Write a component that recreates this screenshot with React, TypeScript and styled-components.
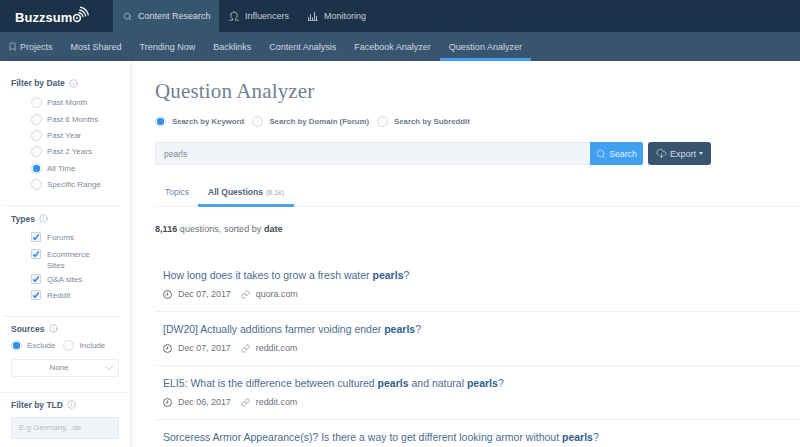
import React from "react";
import styled, { createGlobalStyle } from "styled-components";
import { Search, Bookmark, Info, ChevronDown, Link, CloudDownload } from "lucide-react";

const Global = createGlobalStyle`
  html, body {
    margin: 0;
    padding: 0;
    height: 447px;
    overflow: hidden;
    background: #fff;
    font-family: "Liberation Sans", Arial, sans-serif;
  }
  * { box-sizing: border-box; }
`;

const Page = styled.div`
  width: 800px;
  height: 447px;
  overflow: hidden;
  display: flex;
  flex-direction: column;
`;

const TopBar = styled.div`
  height: 32px;
  flex: none;
  display: flex;
  background: #1c3249;
`;

const Logo = styled.div`
  width: 113px;
  padding: 2px 0 0 15px;
  display: flex;
  align-items: center;
  color: #fff;
  font-size: 13px;
  font-weight: 700;
  letter-spacing: 0.05px;
  svg { margin-top: -5px; }
`;

const TopTab = styled.div<{ $active?: boolean }>`
  display: flex;
  align-items: center;
  gap: 6px;
  height: 32px;
  padding: 0 9px 0 10px;
  font-size: 9px;
  white-space: nowrap;
  color: ${(p) => (p.$active ? "#d3dde5" : "#c3ced8")};
  background: ${(p) => (p.$active ? "#36566f" : "transparent")};
  ${(p) => p.$active && "width: 106px; flex: none; padding-right: 0;"}
`;

const SubBar = styled.div`
  height: 29px;
  flex: none;
  display: flex;
  padding-left: 8px;
  gap: 18px;
  background: #37556f;
`;

const SubTab = styled.div<{ $active?: boolean }>`
  display: flex;
  align-items: center;
  gap: 3px;
  font-size: 9px;
  color: #d0d9e1;
  height: 29px;
  ${(p) =>
    p.$active &&
    `
    margin-left: -9px;
    padding: 3px 9px 0;
    border-bottom: 3px solid #42a0f0;
  `}
`;

const Body = styled.div`
  flex: 1;
  display: flex;
  min-height: 0;
`;

const Sidebar = styled.aside`
  width: 130px;
  flex: none;
  background: #fff;
  box-shadow: 1px 0 6px rgba(40, 60, 80, 0.12);
  padding-top: 15px;
  position: relative;
`;

const Section = styled.section<{ $top?: number }>`
  padding: ${(p) => p.$top || 0}px 11px 0;
`;

const Divider = styled.div<{ $wide?: boolean; $top: number }>`
  height: 1px;
  background: #eef0f3;
  margin: ${(p) => p.$top}px ${(p) => (p.$wide ? "0 0 0" : "11px 0 4px")};
`;

const SectionTitle = styled.div`
  display: flex;
  align-items: center;
  gap: 4px;
  font-size: 8.5px;
  font-weight: 700;
  color: #4a6078;
  height: 14px;
  svg { color: #7d8fa1; }
`;

const OptionList = styled.div<{ $top: number }>`
  padding: ${(p) => p.$top}px 0 0 20px;
`;

const Option = styled.div`
  display: flex;
  align-items: center;
  gap: 5px;
  height: 16.4px;
  font-size: 8px;
  color: #7a8b9c;
`;

const Radio = styled.span<{ $on?: boolean }>`
  width: 11px;
  height: 11px;
  flex: none;
  border-radius: 50%;
  border: 1px solid #d5dbe1;
  background: ${(p) => (p.$on ? "radial-gradient(circle, #2f92ee 0 3.5px, #fff 4px)" : "#fbfcfd")};
`;

const Check = styled.span`
  width: 10px;
  height: 10px;
  flex: none;
  border: 1px solid #cbd3dc;
  border-radius: 1px;
  background: #f6f8fa;
  display: flex;
  align-items: center;
  justify-content: center;
`;

const CheckRow = styled.div<{ $wrapped?: boolean }>`
  display: flex;
  align-items: flex-start;
  gap: 6px;
  font-size: 8px;
  line-height: 11px;
  color: #7a8b9c;
  margin-bottom: ${(p) => (p.$wrapped ? 3 : 5.5)}px;
`;

const SourceRow = styled.div`
  display: flex;
  align-items: center;
  font-size: 8px;
  color: #7a8b9c;
  margin-top: 4.5px;
  height: 11px;
`;

const SourceLabel = styled.span`
  margin: 0 8px 0 5px;
`;

const Select = styled.div`
  margin-top: 7.5px;
  height: 18px;
  border: 1px solid #e8ebef;
  border-radius: 2px;
  font-size: 8px;
  color: #7a8b9c;
  display: flex;
  align-items: center;
  justify-content: center;
  position: relative;
  padding-right: 12px;
  svg { position: absolute; right: 2px; top: 1px; color: #8494a5; }
`;

const TldInput = styled.div`
  margin-top: 5px;
  height: 22px;
  background: #f1f4f8;
  border: 1px solid #e6e9ed;
  border-radius: 2px;
  font-size: 8px;
  color: #b3bdc8;
  display: flex;
  align-items: center;
  padding-left: 7px;
`;

const Main = styled.main`
  flex: 1;
  padding: 17px 0 0 25px;
  min-width: 0;
`;

const Title = styled.h1`
  margin: 0;
  font-family: "Liberation Serif", serif;
  font-weight: 400;
  font-size: 21px;
  line-height: 26px;
  letter-spacing: 0.15px;
  color: #6d8195;
`;

const SearchModes = styled.div`
  display: flex;
  align-items: center;
  margin-top: 11px;
  height: 12px;
`;

const Mode = styled.div`
  display: flex;
  align-items: center;
  gap: 6px;
  margin-right: 8px;
  font-size: 7.8px;
  font-weight: 700;
  color: #687c90;
`;

const SearchRow = styled.div`
  display: flex;
  margin-top: 15px;
  height: 23px;
`;

const SearchInput = styled.div`
  width: 435px;
  background: #f1f4f8;
  border: 1px solid #e9ecef;
  border-right: 0;
  font-size: 8.5px;
  color: #7c8893;
  display: flex;
  align-items: center;
  padding-left: 8px;
`;

const SearchButton = styled.div`
  width: 53px;
  background: #42a0f0;
  border-radius: 0 2px 2px 0;
  color: #e4f1fc;
  font-size: 8.7px;
  display: flex;
  align-items: center;
  justify-content: center;
  gap: 3px;
`;

const ExportButton = styled.div`
  width: 63px;
  margin-left: 5px;
  background: #37556f;
  border-radius: 3px;
  color: #d5dee6;
  font-size: 9px;
  display: flex;
  align-items: center;
  justify-content: center;
  gap: 3px;
`;

const Caret = styled.span`
  width: 0;
  height: 0;
  border-left: 2.5px solid transparent;
  border-right: 2.5px solid transparent;
  border-top: 3px solid #d5dee6;
`;

const Tabs = styled.div`
  display: flex;
  margin-top: 15px;
  height: 27px;
  border-bottom: 1px solid #f0f2f4;
`;

const Tab = styled.div<{ $active?: boolean }>`
  display: flex;
  align-items: center;
  gap: 3px;
  height: 27px;
  padding: ${(p) => (p.$active ? "0 10px" : "0 9px 0 10px")};
  font-size: 8.5px;
  color: ${(p) => (p.$active ? "#4f657b" : "#72879b")};
  font-weight: ${(p) => (p.$active ? 700 : 400)};
  border-bottom: 3px solid ${(p) => (p.$active ? "#4ba3ee" : "transparent")};
`;

const TabCount = styled.small`
  font-size: 7px;
  font-weight: 400;
  color: #9aa7b3;
`;

const Summary = styled.div`
  margin-top: 16px;
  height: 12px;
  font-size: 9px;
  line-height: 12px;
  color: #666f78;
  letter-spacing: 0.05px;
  b { color: #444c54; }
`;

const QuestionList = styled.div`
  margin-top: 22.5px;
`;

const Question = styled.article`
  height: 54px;
  padding: 11px 0 0 8px;
  border-bottom: 1px solid #eef0f2;
  &:last-child { border: 0; }
`;

const QuestionTitle = styled.div`
  font-size: 10.5px;
  line-height: 13px;
  color: #4a6d90;
  b { color: #2f5f8f; }
`;

const Meta = styled.div`
  display: flex;
  align-items: center;
  margin-top: 6.5px;
  font-size: 8.9px;
  line-height: 12px;
  color: #6a737c;
  svg { color: #555e67; flex: none; }
`;

const MetaDate = styled.span`
  margin: 0 10px 0 6px;
`;

const MetaSite = styled.span`
  margin-left: 6px;
`;

const InfluencerIcon = () => (
  <svg width="10" height="10" viewBox="0 0 12 12" fill="none" stroke="#c3ced8" strokeWidth="1">
    <path d="M.5 11h3.7V9.2C2.9 8.4 2.2 7 2.2 5.4 2.2 3 3.8 1.2 6 1.2S9.8 3 9.8 5.4c0 1.6-.7 3-2 3.8V11h3.7" />
  </svg>
);

const MonitoringIcon = () => (
  <svg width="10" height="10" viewBox="0 0 10 10" fill="none" stroke="#aebbc7" strokeWidth="1">
    <path d="M.5 10V6M2.5 10V3M4.5 10V6.5M6.5 10V1M8.5 10V5M0 9.7h10" />
  </svg>
);

const LogoMark = () => (
  <svg width="18" height="18" viewBox="0 0 18 18" fill="none" stroke="#fff">
    <circle cx="5" cy="12" r="3.4" strokeWidth="1.5" />
    <circle cx="5" cy="12" r="0.8" fill="#fff" strokeWidth="0.5" />
    <path d="M6.5 6.6a5.5 5.5 0 0 1 4.6 4.4" strokeWidth="1.3" />
    <path d="M7.2 3.9a8 8 0 0 1 6.6 6.4" strokeWidth="1.3" />
    <path d="M8 1.2a10.5 10.5 0 0 1 8.4 8.2" strokeWidth="1.3" />
  </svg>
);

const Tick = () => (
  <svg width="8" height="8" viewBox="0 0 8 8" fill="none" stroke="#2f92ee" strokeWidth="1.6">
    <path d="M1.2 4.4 3 6.2 6.8 1.4" />
  </svg>
);

const ClockIcon = () => (
  <svg width="9" height="9" viewBox="0 0 10 10" fill="none" stroke="currentColor" strokeWidth="1">
    <circle cx="5" cy="5" r="4.4" />
    <path d="M5.2 2.6v2.9H3" />
  </svg>
);

const TitleInfo = () => <Info size={9} strokeWidth={1.2} />;

const dates = ["Past Month", "Past 6 Months", "Past Year", "Past 2 Years", "All Time", "Specific Range"];
const navs = ["Most Shared", "Trending Now", "Backlinks", "Content Analysis", "Facebook Analyzer"];

const questions = [
  {
    title: <>How long does it takes to grow a fresh water <b>pearls</b>?</>,
    date: "Dec 07, 2017",
    site: "quora.com",
  },
  {
    title: <>[DW20] Actually additions farmer voiding ender <b>pearls</b>?</>,
    date: "Dec 07, 2017",
    site: "reddit.com",
  },
  {
    title: <>ELI5: What is the difference between cultured <b>pearls</b> and natural <b>pearls</b>?</>,
    date: "Dec 06, 2017",
    site: "reddit.com",
  },
  {
    title: <>Sorceress Armor Appearance(s)? Is there a way to get different looking armor without <b>pearls</b>?</>,
    date: "",
    site: "",
  },
];

export default function App() {
  return (
    <Page>
      <Global />
      <TopBar>
        <Logo>
          Buzzsum
          <LogoMark />
        </Logo>
        <TopTab $active>
          <Search size={9} strokeWidth={1.5} />
          Content Research
        </TopTab>
        <TopTab>
          <InfluencerIcon />
          Influencers
        </TopTab>
        <TopTab>
          <MonitoringIcon />
          Monitoring
        </TopTab>
      </TopBar>
      <SubBar>
        <SubTab>
          <Bookmark size={9} strokeWidth={1.5} />
          Projects
        </SubTab>
        {navs.map((n) => (
          <SubTab key={n}>{n}</SubTab>
        ))}
        <SubTab $active>Question Analyzer</SubTab>
      </SubBar>
      <Body>
        <Sidebar>
          <Section>
            <SectionTitle>
              Filter by Date <TitleInfo />
            </SectionTitle>
            <OptionList $top={4.5}>
              {dates.map((d) => (
                <Option key={d}>
                  <Radio $on={d === "All Time"} />
                  {d}
                </Option>
              ))}
            </OptionList>
          </Section>
          <Divider $top={12.5} />
          <Section $top={5.5}>
            <SectionTitle>
              Types <TitleInfo />
            </SectionTitle>
            <OptionList $top={6.5}>
              <CheckRow><Check><Tick /></Check><span>Forums</span></CheckRow>
              <CheckRow $wrapped><Check><Tick /></Check><span>Ecommerce<br />Sites</span></CheckRow>
              <CheckRow><Check><Tick /></Check><span>Q&amp;A sites</span></CheckRow>
              <CheckRow><Check><Tick /></Check><span>Reddit</span></CheckRow>
            </OptionList>
          </Section>
          <Divider $top={15} />
          <Section $top={4.5}>
            <SectionTitle>
              Sources <TitleInfo />
            </SectionTitle>
            <SourceRow>
              <Radio $on />
              <SourceLabel>Exclude</SourceLabel>
              <Radio />
              <SourceLabel>Include</SourceLabel>
            </SourceRow>
            <Select>
              None
              <ChevronDown size={14} strokeWidth={1} />
            </Select>
          </Section>
          <Divider $wide $top={15} />
          <Section $top={5}>
            <SectionTitle>
              Filter by TLD <TitleInfo />
            </SectionTitle>
            <TldInput>E.g Germany, .de</TldInput>
          </Section>
        </Sidebar>
        <Main>
          <Title>Question Analyzer</Title>
          <SearchModes>
            <Mode><Radio $on />Search by Keyword</Mode>
            <Mode><Radio />Search by Domain (Forum)</Mode>
            <Mode><Radio />Search by Subreddit</Mode>
          </SearchModes>
          <SearchRow>
            <SearchInput>pearls</SearchInput>
            <SearchButton>
              <Search size={10} strokeWidth={1.5} />
              Search
            </SearchButton>
            <ExportButton>
              <CloudDownload size={11} strokeWidth={1.5} />
              Export
              <Caret />
            </ExportButton>
          </SearchRow>
          <Tabs>
            <Tab>Topics</Tab>
            <Tab $active>
              All Questions <TabCount>(8.1k)</TabCount>
            </Tab>
          </Tabs>
          <Summary>
            <b>8,116</b> questions, sorted by <b>date</b>
          </Summary>
          <QuestionList>
            {questions.map((q, i) => (
              <Question key={i}>
                <QuestionTitle>{q.title}</QuestionTitle>
                {q.date && (
                  <Meta>
                    <ClockIcon />
                    <MetaDate>{q.date}</MetaDate>
                    <Link size={9} strokeWidth={1.3} />
                    <MetaSite>{q.site}</MetaSite>
                  </Meta>
                )}
              </Question>
            ))}
          </QuestionList>
        </Main>
      </Body>
    </Page>
  );
}
